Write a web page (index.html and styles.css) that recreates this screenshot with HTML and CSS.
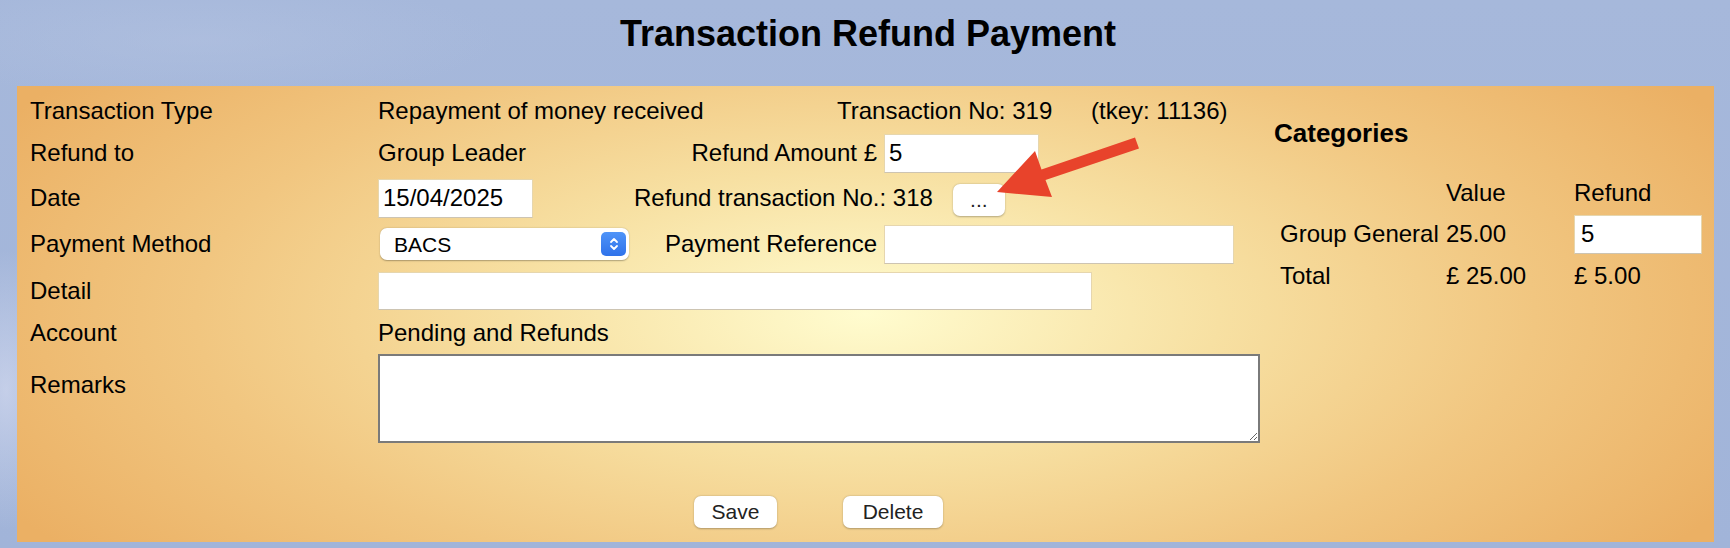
FILE: index.html
```html
<!DOCTYPE html>
<html lang="en">
    <head>
        <meta charset="utf-8">
        <title>Transaction Refund Payment</title>
        <link rel="stylesheet" href="styles.css">
    </head>
    <body>
        <h1 class="page-title">Transaction Refund Payment</h1>
        <div class="panel">
            <form class="main">
                <div class="row row-type">
                    <span class="label">Transaction Type</span>
                    <span class="type-val">Repayment of money received</span>
                    <span class="txn-no">Transaction No: 319</span>
                    <span>(tkey: 11136)</span>
                </div>
                <div class="row row-refund">
                    <span class="label">Refund to</span>
                    <span class="val">Group Leader</span>
                    <label class="side-label" for="amount">Refund Amount &pound;</label>
                    <input class="field amount" type="text" id="amount" value="5">
                </div>
                <div class="row row-date">
                    <label class="label" for="date">Date</label>
                    <span class="val"><input class="field date" type="text" id="date" value="15/04/2025"></span>
                    <span>Refund transaction No.: 318</span>
                    <button type="button" class="btn btn-pick">...</button>
                </div>
                <div class="row row-method">
                    <label class="label" for="method">Payment Method</label>
                    <span class="val">
                        <span class="select-wrap">
                            <select id="method">
                                <option>BACS</option>
                                <option>Cheque</option>
                                <option>Cash</option>
                            </select>
                            <span class="stepper">
                                <svg width="10" height="16" viewBox="0 0 10 16">
                                    <path d="M2 6 L5 3 L8 6 M2 10 L5 13 L8 10" fill="none" stroke="#fff" stroke-width="1.8" stroke-linecap="round" stroke-linejoin="round"/>
                                </svg>
                            </span>
                        </span>
                    </span>
                    <label class="side-label" for="payref">Payment Reference</label>
                    <input class="field payref" type="text" id="payref">
                </div>
                <div class="row row-detail">
                    <label class="label" for="detail">Detail</label>
                    <input class="field detail" type="text" id="detail">
                </div>
                <div class="row row-account">
                    <span class="label">Account</span>
                    <span>Pending and Refunds</span>
                </div>
                <div class="row row-remarks">
                    <label class="label" for="remarks">Remarks</label>
                    <textarea id="remarks"></textarea>
                </div>
                <div class="actions">
                    <button type="button" class="btn btn-save">Save</button>
                    <button type="button" class="btn btn-delete">Delete</button>
                </div>
            </form>
            <div class="cats">
                <h3>Categories</h3>
                <div class="cat-grid">
                    <span></span>
                    <span>Value</span>
                    <span>Refund</span>
                    <span>Group General</span>
                    <span>25.00</span>
                    <input class="field cat-refund" type="text" value="5">
                    <span>Total</span>
                    <span>&pound; 25.00</span>
                    <span>&pound; 5.00</span>
                </div>
            </div>
            <svg class="arrow" width="155" height="75" viewBox="990 130 155 75">
                <polygon points="997,192 1035,151 1041.5,169.5 1135,137.5 1139,148.5 1045.5,180 1052,197" fill="#e8432b"/>
            </svg>
        </div>
    </body>
</html>
```

FILE: styles.css
```css
* {
    margin: 0;
    padding: 0;
    box-sizing: border-box;
}
:root {
    --sky: #a4b6da;
    --text: #000;
    --field-line: #e6d6ae;
}
html {
    font-family: "Liberation Sans", Arial, Helvetica, sans-serif;
    font-size: 24px;
    color: var(--text);
    background-color: var(--sky);
    background-image:
        radial-gradient(ellipse 60px 140px at 6px 390px, rgba(225, 228, 245, .55), transparent),
        radial-gradient(ellipse 300px 60px at 200px 40px, rgba(180, 195, 225, .5), transparent),
        linear-gradient(180deg, #a6b8db 0%, #a1b4d9 100%);
}
body {
    height: 548px;
    overflow: hidden;
}
.page-title {
    font-size: 36px;
    font-weight: bold;
    line-height: 40px;
    text-align: center;
    margin: 14px 0 32px 6px;
}
.panel {
    position: relative;
    display: flex;
    margin: 0 16px 0 17px;
    height: 456px;
    background: radial-gradient(ellipse 58% 88% at 50% 50%, #fffccf 0%, #f7e0a2 36%, #f1c680 68%, #ebb064 100%);
}
.main {
    width: 1257px;
    padding: 5px 0 0 13px;
}
.row {
    display: flex;
    align-items: center;
    line-height: 28px;
}
.row-type { height: 40px; }
.row-refund { height: 44px; }
.row-date { height: 46px; }
.row-method { height: 46px; }
.row-detail { height: 47px; }
.row-account { height: 38px; }
.row-remarks {
    align-items: flex-start;
    margin-top: 2px;
}
.label {
    width: 348px;
    flex-shrink: 0;
}
.row-remarks .label {
    padding-top: 17px;
}
.type-val {
    width: 459px;
}
.txn-no {
    width: 254px;
}
.val {
    width: 256px;
    display: flex;
    align-items: center;
}
.side-label {
    width: 250px;
    text-align: right;
    padding-right: 7px;
}
.field {
    font-family: inherit;
    font-size: 24px;
    height: 39px;
    padding: 0 4px;
    background: #fff;
    border: 1px solid var(--field-line);
    border-bottom-color: #cdc4b2;
    border-radius: 0;
    outline: none;
}
.amount, .date { width: 155px; }
.payref { width: 350px; }
.detail { width: 714px; height: 38px; }
.select-wrap {
    display: flex;
    align-items: center;
    width: 249px;
    height: 32px;
    margin-left: 2px;
    background: #fff;
    border-radius: 7px;
    box-shadow: 0 0.5px 1.5px rgba(0, 0, 0, .3);
    padding-right: 3px;
}
.select-wrap select {
    flex: 1;
    appearance: none;
    -webkit-appearance: none;
    border: 0;
    background: transparent;
    font-family: inherit;
    font-size: 21px;
    padding-left: 14px;
    outline: none;
    color: #000;
}
.stepper {
    display: flex;
    align-items: center;
    justify-content: center;
    width: 25px;
    height: 24px;
    border-radius: 5px;
    background: linear-gradient(180deg, #4f94f8 0%, #2f72ea 100%);
}
textarea {
    width: 882px;
    height: 89px;
    border: 2px solid #7a7a7a;
    background: #fff;
    font-family: inherit;
    font-size: 20px;
    outline: none;
}
.btn {
    height: 32px;
    background: #fff;
    border: 0;
    border-radius: 7px;
    box-shadow: 0 0.5px 2px rgba(0, 0, 0, .28);
    font-family: inherit;
    font-size: 21px;
    color: #222;
    cursor: pointer;
}
.btn-pick {
    width: 52px;
    margin-left: 20px;
    font-size: 21px;
    line-height: 32px;
    margin-top: 3px;
}
.actions {
    display: flex;
    margin-top: 53px;
    padding-left: 664px;
}
.btn-save { width: 83px; }
.btn-delete { width: 100px; margin-left: 66px; }
.cats {
    flex: 1;
}
.cats h3 {
    font-size: 26px;
    font-weight: bold;
    line-height: 30px;
    margin: 32px 0 25px;
}
.cat-grid {
    display: grid;
    grid-template-columns: 166px 128px 128px;
    grid-template-rows: 40px 42px 42px;
    align-items: center;
    margin-left: 6px;
    line-height: 28px;
}
.cat-refund {
    width: 128px;
    padding-left: 6px;
}
.arrow {
    position: absolute;
    left: 973px;
    top: 44px;
    pointer-events: none;
}
```
